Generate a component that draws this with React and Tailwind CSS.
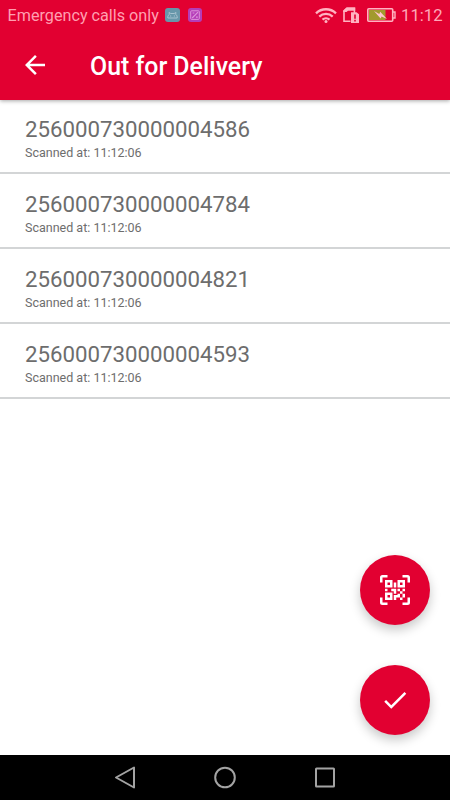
import clsx from "clsx";

const scans = [
  { code: "256000730000004586", time: "11:12:06" },
  { code: "256000730000004784", time: "11:12:06" },
  { code: "256000730000004821", time: "11:12:06" },
  { code: "256000730000004593", time: "11:12:06" },
];

const StatusBar = () => (
  <div className="flex h-[31px] items-center text-[16.2px] leading-none text-[#ff9fb0]">
    <span className="ml-[7.5px] w-[151.5px] pt-[2px] whitespace-nowrap">Emergency calls only</span>
    <svg className="ml-[6px]" width="15" height="15" viewBox="0 0 15 15" fill="none">
      <rect width="15" height="14" rx="3" fill="#6797aa" />
      <path
        d="M2.8 10V8.8a2.8 2.8 0 0 1 1.6-2.4L4 4.5l1.8 1h3.4l1.8-1-.4 1.9a2.8 2.8 0 0 1 1.6 2.4V10z"
        stroke="#a9c3d0"
      />
      <path d="M5 8h1.2M8.8 8H10" stroke="#a9c3d0" />
    </svg>
    <svg className="ml-2" width="14" height="15" viewBox="0 0 14 15" fill="none">
      <rect width="14" height="14" rx="3" fill="#b43cb8" />
      <rect x="2.7" y="2.8" width="8.6" height="8.6" rx="1" stroke="#dd93dc" />
      <path d="M4.2 10L10 4.2M4.6 5h1.8M8 9.2h1.8" stroke="#dd93dc" strokeWidth="1.2" />
    </svg>

    <div className="ml-auto flex items-center">
      <svg width="22" height="17" viewBox="0 0 22 17" fill="none" stroke="#ffb3c1" strokeWidth="2.3">
        <path d="M1 6.3c5.6-5.4 14.4-5.4 20 0M4.3 9.6c3.8-3.7 9.6-3.7 13.4 0M7.5 12.7c2-1.9 5-1.9 7 0" />
        <circle cx="11" cy="14.6" r="1.5" fill="#ffb3c1" stroke="none" />
      </svg>
      <svg className="-mt-px ml-[6px]" width="16" height="16" viewBox="0 0 16 16" fill="none">
        <path d="M7.5 14.2H1V4L4 1.2h7.4V6" stroke="#ffb3c1" strokeWidth="1.6" />
        <path d="M.2 5V3.5L3.5.4h8.7v3.4H5L3.5 5z" fill="#ffb3c1" />
        <path d="M8 5.2h5.5L16 7.3V16H8z" fill="#ffb3c1" />
        <path d="M12 7.5v4.2M12 12.8v1.6" stroke="#e20031" strokeWidth="1.6" />
      </svg>
      <svg className="-mt-px ml-[8px]" width="29" height="14" viewBox="0 0 29 14" fill="none">
        <rect x=".8" y=".8" width="24.9" height="12.4" rx="1" stroke="#ffb3c1" strokeWidth="1.6" />
        <rect x="2" y="2" width="16.5" height="10" fill="#a29a2d" />
        <path d="M26 4h2v6h-2" stroke="#ffb3c1" strokeWidth="1.4" />
        <path d="M7 3l5.3 3 .9-2.2L20 11l-5.4-2.6-1 2.1z" fill="#ffc5cf" />
      </svg>
      <span className="mr-[8px] ml-[5px] w-[41px] pt-[2px] whitespace-nowrap text-[16.7px] text-[#ffa8b8]">
        11:12
      </span>
    </div>
  </div>
);

const Header = () => (
  <header className="relative z-10 h-[100px] bg-[#e20031] shadow-[0_1px_4px_rgba(0,0,0,0.35)]">
    <StatusBar />
    <div className="flex h-[69px] items-center pl-5 text-white">
      <svg className="-mt-px" width="30" height="30" viewBox="0 0 24 24" fill="currentColor">
        <path d="M20 11H7.83l5.59-5.59L12 4l-8 8 8 8 1.41-1.41L7.83 13H20v-2z" />
      </svg>
      <h1 className="mt-[3px] ml-10 text-[24.9px] leading-[30px] font-medium whitespace-nowrap">Out for Delivery</h1>
    </div>
  </header>
);

const ScanRow = ({ code, time }) => (
  <li className="h-[75px] border-b-2 border-[#d3d5d6] pt-[15px] pl-[25px] text-[#6d6d6d]">
    <p className="text-[22.25px] leading-[30px]">{code}</p>
    <p className="text-[12.5px] leading-[17px]">Scanned at: {time}</p>
  </li>
);

const Fab = ({ label, className, children }) => (
  <button
    aria-label={label}
    className={clsx(
      "flex size-[70px] items-center justify-center rounded-full bg-[#e20031] text-white shadow-[0_5px_11px_rgba(0,0,0,0.22)]",
      className
    )}
  >
    <svg width="30" height="30" viewBox="0 0 24 24" fill="currentColor">
      {children}
    </svg>
  </button>
);

const NavBar = () => (
  <nav className="flex h-[45px] items-center justify-center gap-[76px] bg-black">
    <svg width="24" height="24" viewBox="0 0 24 24" fill="none" stroke="#a3a3a3" strokeWidth="2">
      <path d="M3 11.5L21 1.5v20z" strokeLinejoin="round" />
    </svg>
    <svg width="24" height="24" viewBox="0 0 24 24" fill="none" stroke="#a3a3a3" strokeWidth="2">
      <circle cx="12" cy="11.5" r="9.8" />
    </svg>
    <svg width="24" height="24" viewBox="0 0 24 24" fill="none" stroke="#a3a3a3" strokeWidth="2">
      <rect x="3" y="2.5" width="18" height="18" rx=".5" />
    </svg>
  </nav>
);

const App = () => {
  return (
    <div className="flex h-[800px] w-[450px] flex-col overflow-hidden bg-white font-['Roboto',sans-serif]">
      <Header />
      <main className="-mt-px flex flex-1 flex-col">
        <ul>
          {scans.map((scan) => (
            <ScanRow key={scan.code} {...scan} />
          ))}
        </ul>
        <div className="mt-auto mr-5 mb-5 flex flex-col items-end gap-10">
          <Fab label="Scan">
            <path d="M4,4H10V10H4V4M20,4V10H14V4H20M14,15H16V13H14V11H16V13H18V11H20V13H18V15H20V18H18V20H16V18H13V20H11V16H14V15M16,15V18H18V15H16M4,20V14H10V20H4M6,6V8H8V6H6M16,6V8H18V6H16M6,16V18H8V16H6M4,11H6V13H4V11M9,11H13V15H11V13H9V11M11,6H13V10H11V6M2,2V6H0V2A2,2 0 0,1 2,0H6V2H2M22,0A2,2 0 0,1 24,2V6H22V2H18V0H22M2,18V22H6V24H2A2,2 0 0,1 0,22V18H2M22,22V18H24V22A2,2 0 0,1 22,24H18V22H22Z" />
          </Fab>
          <Fab label="Confirm">
            <path d="M9 16.17L4.83 12l-1.42 1.41L9 19 21 7l-1.41-1.41z" />
          </Fab>
        </div>
      </main>
      <NavBar />
    </div>
  );
};

export default App;
